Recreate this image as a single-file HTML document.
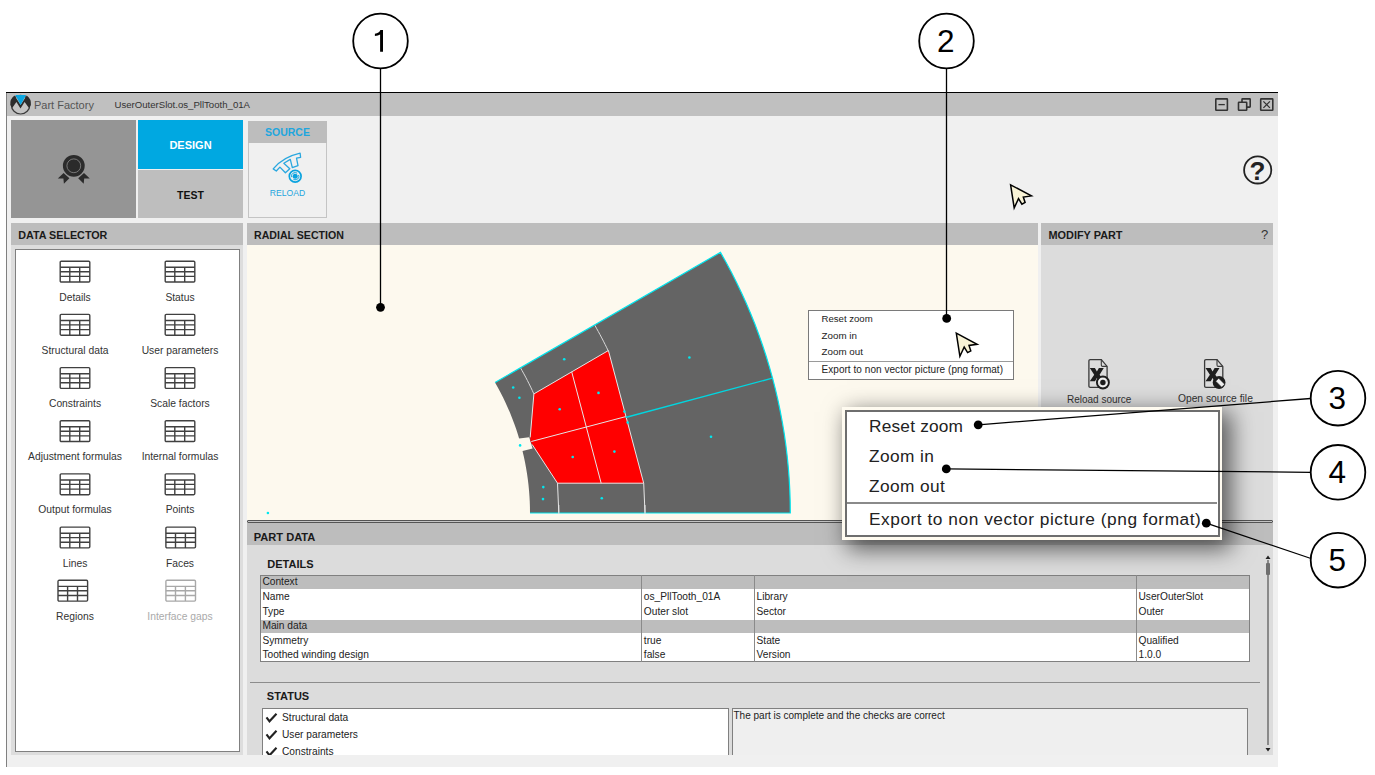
<!DOCTYPE html>
<html><head><meta charset="utf-8"><style>
*{margin:0;padding:0;box-sizing:border-box}
html,body{width:1375px;height:775px;overflow:hidden;background:#fff;font-family:"Liberation Sans",sans-serif;color:#333}
.a{position:absolute}
.hdr{position:absolute;background:#bdbdbd;height:22px;font-weight:bold;font-size:11px;color:#1a1a1a;line-height:22px;padding-left:7px;white-space:nowrap}
.t{position:absolute;white-space:nowrap;line-height:1}
svg{position:absolute;overflow:visible}
</style></head><body>
<div class="a" style="left:6px;top:92px;width:1272px;height:1px;background:#000;"></div>
<div class="a" style="left:6px;top:93px;width:1px;height:674px;background:#808080;"></div>
<div class="a" style="left:7px;top:93px;width:1271px;height:23px;background:#c0c0c0;"></div>
<div class="a" style="left:7px;top:116px;width:1271px;height:651px;background:#f0f0f0;"></div>
<svg style="left:0;top:0" width="40" height="120" viewBox="0 0 40 120">
<circle cx="20.6" cy="104.7" r="9.3" fill="#c4c4c4" stroke="#3a3a3a" stroke-width="1.2"/>
<path d="M14.5,95.4 A10,10 0 0 0 10.4,104.9 L12.2,108.1 L16.4,102 L20.5,108.6 L24.6,102 L29,108.1 L30.8,104.9 A10,10 0 0 0 26.7,95.4 L20.6,104.9 Z" fill="#2c2c2c"/>
<path d="M15.3,94.9 L26.1,94.9 L20.6,104.9 Z" fill="#0aa6e0"/>
</svg>
<div class="t" style="left:34px;top:99.58px;font-size:11px;color:#555;font-weight:normal;">Part Factory</div>
<div class="t" style="left:114.5px;top:99.86px;font-size:9.6px;color:#333;font-weight:normal;">UserOuterSlot.os_PllTooth_01A</div>
<svg style="left:1200px;top:90px" width="80" height="30" viewBox="1200 90 80 30">
<rect x="1215.8" y="98.9" width="11.6" height="11.4" fill="none" stroke="#333" stroke-width="1.6" rx="0.5"/>
<line x1="1218.4" y1="104.6" x2="1224.8" y2="104.6" stroke="#333" stroke-width="1.3"/>
<rect x="1242" y="98.9" width="8.2" height="8.2" fill="none" stroke="#333" stroke-width="1.6" rx="0.5"/>
<rect x="1238.5" y="102.2" width="8.2" height="8.1" fill="#c0c0c0" stroke="#333" stroke-width="1.6" rx="0.5"/>
<rect x="1260.7" y="98.9" width="12.1" height="11.4" fill="none" stroke="#333" stroke-width="1.6" rx="0.5"/>
<path d="M1263.4,101.4 L1269.9,107.9 M1269.9,101.4 L1263.4,107.9" stroke="#333" stroke-width="1.3"/>
</svg>
<div class="a" style="left:11px;top:120px;width:125px;height:98px;background:#959595;"></div>
<svg style="left:0;top:0" width="100" height="200" viewBox="0 0 100 200">
<circle cx="73.8" cy="165.8" r="10.9" fill="#2b2b2b"/>
<circle cx="73.8" cy="165.8" r="6.9" fill="none" stroke="#8a8a8a" stroke-width="0.8"/>
<path d="M57.8,178.4 L63.6,173 L69.4,178.2 L63.9,183.8 L63.4,178.6 Z" fill="#2b2b2b"/>
<path d="M89.8,178.4 L84,173 L78.2,178.2 L83.7,183.8 L84.2,178.6 Z" fill="#2b2b2b"/>
</svg>
<div class="a" style="left:138px;top:120px;width:105px;height:49px;background:#00a8e1;"></div>
<div class="t" style="left:40.5px;width:300px;text-align:center;top:140.38px;font-size:11px;color:#fff;font-weight:bold;">DESIGN</div>
<div class="a" style="left:138px;top:170px;width:105px;height:48px;background:#bebebe;"></div>
<div class="t" style="left:40.5px;width:300px;text-align:center;top:189.60px;font-size:10.5px;color:#111;font-weight:bold;">TEST</div>
<div class="a" style="left:248px;top:121px;width:79px;height:97px;background:#f0f0f0;border:1px solid #c4c4c4"></div>
<div class="a" style="left:248px;top:121px;width:79px;height:22px;background:#bdbdbd;"></div>
<div class="t" style="left:137.5px;width:300px;text-align:center;top:127.10px;font-size:10.5px;color:#1ea6de;font-weight:bold;">SOURCE</div>
<svg style="left:240px;top:140px" width="80" height="50" viewBox="240 140 80 50">
<path d="M273.2,168.9 Q283,157 300.1,153.2 L300.6,157.3 L296.5,158.1 L298,165.6 L292.3,167.6 L290.3,159.4 L283.8,163.2 L289.8,168.7 L285.4,172.8 L279.9,167.1 L276.3,171 Z" fill="none" stroke="#29a7df" stroke-width="1.3" stroke-linejoin="round"/>
<circle cx="295.2" cy="176.2" r="5.9" fill="#f0f0f0" stroke="#0aa3df" stroke-width="1.7"/>
<circle cx="295.2" cy="176.2" r="3.6" fill="none" stroke="#0aa3df" stroke-width="0.9" stroke-dasharray="8.5 2.8" transform="rotate(-20 295.2 176.2)"/>
<circle cx="295.2" cy="176.2" r="2.5" fill="#0aa3df"/>
</svg>
<div class="t" style="left:137.5px;width:300px;text-align:center;top:188.71px;font-size:8.6px;color:#1ea6de;font-weight:normal;">RELOAD</div>
<svg style="left:1200px;top:140px" width="80" height="60" viewBox="1200 140 80 60">
<circle cx="1257.7" cy="169.9" r="13.6" fill="none" stroke="#222" stroke-width="1.8"/>
</svg>
<div class="t" style="left:1107.5px;width:300px;text-align:center;top:157.66px;font-size:26px;color:#222;font-weight:bold;">?</div>
<svg style="left:0;top:0" width="1375" height="775" viewBox="0 0 1375 775"><path d="M1010.6,184.8 L1031.4,195.9 L1023.3,197.0 L1025.1,202.4 L1021.9,204.2 L1018.5,198.6 L1014.2,207.9 Z" fill="#f8f3d6" stroke="#000" stroke-width="1.5" stroke-linejoin="miter"/></svg>
<div class="a" style="left:11px;top:223px;width:232px;height:22px;background:#bdbdbd;"></div>
<div class="t" style="left:18.2px;top:229.89px;font-size:10.75px;color:#1a1a1a;font-weight:bold;">DATA SELECTOR</div>
<div class="a" style="left:247px;top:223px;width:791px;height:22px;background:#bdbdbd;"></div>
<div class="t" style="left:254px;top:230.02px;font-size:10.6px;color:#1a1a1a;font-weight:bold;">RADIAL SECTION</div>
<div class="a" style="left:1041px;top:223px;width:232px;height:22px;background:#bdbdbd;"></div>
<div class="t" style="left:1048.5px;top:229.76px;font-size:10.9px;color:#1a1a1a;font-weight:bold;">MODIFY PART</div>
<div class="t" style="left:1261px;top:228.48px;font-size:13px;color:#333;font-weight:normal;">?</div>
<div class="a" style="left:11px;top:245px;width:232px;height:510px;background:#dddddd;"></div>
<div class="a" style="left:15px;top:249px;width:225px;height:503px;background:#fff;border:1.5px solid #808080"></div>
<svg style="left:0;top:0" width="1" height="1" viewBox="0 0 1 1" ><g transform="translate(60.2,261.2)" fill="none" stroke="#404040" stroke-width="1.4"><rect x="0" y="0" width="29.6" height="20.8" rx="1.1"/><path d="M0,6.1 H29.6 M0,10.5 H29.6 M0,15.2 H29.6 M9.6,6.1 V20.8 M19.5,6.1 V20.8"/></g></svg>
<div class="t" style="left:-75px;width:300px;text-align:center;top:292.67px;font-size:10.3px;color:#333;font-weight:normal;">Details</div>
<svg style="left:0;top:0" width="1" height="1" viewBox="0 0 1 1" ><g transform="translate(165.2,261.2)" fill="none" stroke="#404040" stroke-width="1.4"><rect x="0" y="0" width="29.6" height="20.8" rx="1.1"/><path d="M0,6.1 H29.6 M0,10.5 H29.6 M0,15.2 H29.6 M9.6,6.1 V20.8 M19.5,6.1 V20.8"/></g></svg>
<div class="t" style="left:30px;width:300px;text-align:center;top:292.67px;font-size:10.3px;color:#333;font-weight:normal;">Status</div>
<svg style="left:0;top:0" width="1" height="1" viewBox="0 0 1 1" ><g transform="translate(60.2,314.4)" fill="none" stroke="#404040" stroke-width="1.4"><rect x="0" y="0" width="29.6" height="20.8" rx="1.1"/><path d="M0,6.1 H29.6 M0,10.5 H29.6 M0,15.2 H29.6 M9.6,6.1 V20.8 M19.5,6.1 V20.8"/></g></svg>
<div class="t" style="left:-75px;width:300px;text-align:center;top:345.85px;font-size:10.3px;color:#333;font-weight:normal;">Structural data</div>
<svg style="left:0;top:0" width="1" height="1" viewBox="0 0 1 1" ><g transform="translate(165.2,314.4)" fill="none" stroke="#404040" stroke-width="1.4"><rect x="0" y="0" width="29.6" height="20.8" rx="1.1"/><path d="M0,6.1 H29.6 M0,10.5 H29.6 M0,15.2 H29.6 M9.6,6.1 V20.8 M19.5,6.1 V20.8"/></g></svg>
<div class="t" style="left:30px;width:300px;text-align:center;top:345.85px;font-size:10.3px;color:#333;font-weight:normal;">User parameters</div>
<svg style="left:0;top:0" width="1" height="1" viewBox="0 0 1 1" ><g transform="translate(60.2,367.6)" fill="none" stroke="#404040" stroke-width="1.4"><rect x="0" y="0" width="29.6" height="20.8" rx="1.1"/><path d="M0,6.1 H29.6 M0,10.5 H29.6 M0,15.2 H29.6 M9.6,6.1 V20.8 M19.5,6.1 V20.8"/></g></svg>
<div class="t" style="left:-75px;width:300px;text-align:center;top:399.03px;font-size:10.3px;color:#333;font-weight:normal;">Constraints</div>
<svg style="left:0;top:0" width="1" height="1" viewBox="0 0 1 1" ><g transform="translate(165.2,367.6)" fill="none" stroke="#404040" stroke-width="1.4"><rect x="0" y="0" width="29.6" height="20.8" rx="1.1"/><path d="M0,6.1 H29.6 M0,10.5 H29.6 M0,15.2 H29.6 M9.6,6.1 V20.8 M19.5,6.1 V20.8"/></g></svg>
<div class="t" style="left:30px;width:300px;text-align:center;top:399.03px;font-size:10.3px;color:#333;font-weight:normal;">Scale factors</div>
<svg style="left:0;top:0" width="1" height="1" viewBox="0 0 1 1" ><g transform="translate(60.2,420.7)" fill="none" stroke="#404040" stroke-width="1.4"><rect x="0" y="0" width="29.6" height="20.8" rx="1.1"/><path d="M0,6.1 H29.6 M0,10.5 H29.6 M0,15.2 H29.6 M9.6,6.1 V20.8 M19.5,6.1 V20.8"/></g></svg>
<div class="t" style="left:-75px;width:300px;text-align:center;top:452.21px;font-size:10.3px;color:#333;font-weight:normal;">Adjustment formulas</div>
<svg style="left:0;top:0" width="1" height="1" viewBox="0 0 1 1" ><g transform="translate(165.2,420.7)" fill="none" stroke="#404040" stroke-width="1.4"><rect x="0" y="0" width="29.6" height="20.8" rx="1.1"/><path d="M0,6.1 H29.6 M0,10.5 H29.6 M0,15.2 H29.6 M9.6,6.1 V20.8 M19.5,6.1 V20.8"/></g></svg>
<div class="t" style="left:30px;width:300px;text-align:center;top:452.21px;font-size:10.3px;color:#333;font-weight:normal;">Internal formulas</div>
<svg style="left:0;top:0" width="1" height="1" viewBox="0 0 1 1" ><g transform="translate(60.2,473.9)" fill="none" stroke="#404040" stroke-width="1.4"><rect x="0" y="0" width="29.6" height="20.8" rx="1.1"/><path d="M0,6.1 H29.6 M0,10.5 H29.6 M0,15.2 H29.6 M9.6,6.1 V20.8 M19.5,6.1 V20.8"/></g></svg>
<div class="t" style="left:-75px;width:300px;text-align:center;top:505.39px;font-size:10.3px;color:#333;font-weight:normal;">Output formulas</div>
<svg style="left:0;top:0" width="1" height="1" viewBox="0 0 1 1" ><g transform="translate(165.2,473.9)" fill="none" stroke="#404040" stroke-width="1.4"><rect x="0" y="0" width="29.6" height="20.8" rx="1.1"/><path d="M0,6.1 H29.6 M0,10.5 H29.6 M0,15.2 H29.6 M9.6,6.1 V20.8 M19.5,6.1 V20.8"/></g></svg>
<div class="t" style="left:30px;width:300px;text-align:center;top:505.39px;font-size:10.3px;color:#333;font-weight:normal;">Points</div>
<svg style="left:0;top:0" width="1" height="1" viewBox="0 0 1 1" ><g transform="translate(60.2,527.1)" fill="none" stroke="#404040" stroke-width="1.4"><rect x="0" y="0" width="29.6" height="20.8" rx="1.1"/><path d="M0,6.1 H29.6 M0,10.5 H29.6 M0,15.2 H29.6 M9.6,6.1 V20.8 M19.5,6.1 V20.8"/></g></svg>
<div class="t" style="left:-75px;width:300px;text-align:center;top:558.57px;font-size:10.3px;color:#333;font-weight:normal;">Lines</div>
<svg style="left:0;top:0" width="1" height="1" viewBox="0 0 1 1" ><g transform="translate(165.9,527.1)" fill="none" stroke="#404040" stroke-width="1.4"><rect x="0" y="0" width="29.6" height="20.8" rx="1.1"/><path d="M0,6.1 H29.6 M0,10.5 H29.6 M0,15.2 H29.6 M9.6,6.1 V20.8 M19.5,6.1 V20.8"/></g></svg>
<div class="t" style="left:30px;width:300px;text-align:center;top:558.57px;font-size:10.3px;color:#333;font-weight:normal;">Faces</div>
<svg style="left:0;top:0" width="1" height="1" viewBox="0 0 1 1" ><g transform="translate(58.0,580.3)" fill="none" stroke="#404040" stroke-width="1.4"><rect x="0" y="0" width="29.6" height="20.8" rx="1.1"/><path d="M0,6.1 H29.6 M0,10.5 H29.6 M0,15.2 H29.6 M9.6,6.1 V20.8 M19.5,6.1 V20.8"/></g></svg>
<div class="t" style="left:-75px;width:300px;text-align:center;top:611.75px;font-size:10.3px;color:#333;font-weight:normal;">Regions</div>
<svg style="left:0;top:0" width="1" height="1" viewBox="0 0 1 1" ><g transform="translate(165.9,580.3)" fill="none" stroke="#a8a8a8" stroke-width="1.4"><rect x="0" y="0" width="29.6" height="20.8" rx="1.1"/><path d="M0,6.1 H29.6 M0,10.5 H29.6 M0,15.2 H29.6 M9.6,6.1 V20.8 M19.5,6.1 V20.8"/></g></svg>
<div class="t" style="left:30px;width:300px;text-align:center;top:611.75px;font-size:10.3px;color:#aaa;font-weight:normal;">Interface gaps</div>
<div class="a" style="left:247px;top:245px;width:791px;height:275px;background:#fdf9ee;"></div>
<svg style="left:0;top:0" width="1375" height="775" viewBox="0 0 1375 775"><path d="M790.30,513.00 L790.18,501.63 L789.80,490.26 L789.18,478.91 L788.32,467.57 L787.20,456.25 L785.84,444.96 L784.23,433.70 L782.38,422.48 L780.28,411.30 L777.94,400.17 L775.36,389.09 L772.54,378.08 L769.47,367.13 L766.17,356.24 L762.63,345.43 L758.86,334.70 L754.86,324.06 L750.62,313.51 L746.15,303.05 L741.46,292.69 L736.54,282.43 L731.40,272.29 L726.04,262.26 L720.46,252.35 L495.03,382.50 L497.83,387.46 L500.51,392.48 L503.08,397.56 L505.55,402.70 L507.90,407.88 L510.13,413.12 L512.25,418.40 L514.26,423.73 L516.15,429.10 L517.92,434.52 L519.57,439.96 L521.11,445.45 L522.52,450.96 L523.81,456.51 L524.98,462.08 L526.03,467.68 L526.96,473.30 L527.77,478.93 L528.45,484.59 L529.01,490.25 L529.44,495.93 L529.75,501.62 L529.94,507.31 L530.00,513.00 Z" fill="#646464"/><path d="M515,438.9 L529.2,437.3 L532.6,448.6 L520.5,451.4 Z" fill="#fdf9ee"/><path d="M533.90,393.90 L608.40,350.50 L625.80,416.60 L643.70,483.20 L557.50,483.20 L532.20,444.50 L530.60,441.20 L530.20,437.40 Z" fill="#ff0000"/><line x1="533.9" y1="393.9" x2="608.4" y2="350.5" stroke="#e6e6e6" stroke-width="1"/><line x1="608.4" y1="350.5" x2="643.7" y2="483.2" stroke="#e6e6e6" stroke-width="1"/><line x1="557.5" y1="483.2" x2="643.7" y2="483.2" stroke="#e6e6e6" stroke-width="1"/><line x1="532.2" y1="444.5" x2="557.5" y2="483.2" stroke="#e6e6e6" stroke-width="1"/><line x1="530.2" y1="437.4" x2="533.9" y2="393.9" stroke="#e6e6e6" stroke-width="1"/><line x1="531.3" y1="441.5" x2="625.8" y2="416.6" stroke="#e6e6e6" stroke-width="1"/><line x1="571.7" y1="371.8" x2="601.2" y2="483.3" stroke="#e6e6e6" stroke-width="1"/><line x1="557.5" y1="483.2" x2="558.8" y2="513" stroke="#e6e6e6" stroke-width="1"/><line x1="643.7" y1="483.2" x2="645" y2="513" stroke="#e6e6e6" stroke-width="1"/><path d="M520.24,367.36 L522.09,370.61 L523.91,373.88 L525.68,377.17 L527.40,380.48 L529.09,383.82 L530.73,387.18 L532.33,390.56 L533.88,393.96" fill="none" stroke="#d8d8d8" stroke-width="1"/><path d="M594.63,325.00 L596.46,328.21 L598.25,331.43 L600.02,334.67 L601.76,337.93 L603.46,341.20 L605.13,344.50 L606.77,347.80 L608.37,351.13" fill="none" stroke="#d8d8d8" stroke-width="1"/><path d="M495.03,382.50 L720.46,252.35 L720.46,252.35 L726.04,262.26 L731.40,272.29 L736.54,282.43 L741.46,292.69 L746.15,303.05 L750.62,313.51 L754.86,324.06 L758.86,334.70 L762.63,345.43 L766.17,356.24 L769.47,367.13 L772.54,378.08 L775.36,389.09 L777.94,400.17 L780.28,411.30 L782.38,422.48 L784.23,433.70 L785.84,444.96 L787.20,456.25 L788.32,467.57 L789.18,478.91 L789.80,490.26 L790.18,501.63 L790.30,513.00 L530.00,513.00" fill="none" stroke="#00e5ee" stroke-width="1.2"/><line x1="625.5" y1="417.5" x2="772.3" y2="378.2" stroke="#00d6e0" stroke-width="1.3"/><line x1="558.8" y1="505" x2="558.8" y2="514" stroke="#e6e6e6" stroke-width="1"/><line x1="645" y1="505" x2="645" y2="514" stroke="#e6e6e6" stroke-width="1"/><circle cx="564.2" cy="359.2" r="1.3" fill="#00e8f0"/><circle cx="689.4" cy="357.5" r="1.3" fill="#00e8f0"/><circle cx="513.2" cy="387.5" r="1.3" fill="#00e8f0"/><circle cx="519.4" cy="397.7" r="1.3" fill="#00e8f0"/><circle cx="559.7" cy="409.3" r="1.3" fill="#00e8f0"/><circle cx="598.5" cy="392.9" r="1.3" fill="#00e8f0"/><circle cx="572.7" cy="457" r="1.3" fill="#00e8f0"/><circle cx="614.4" cy="451.6" r="1.3" fill="#00e8f0"/><circle cx="520.1" cy="445.4" r="1.3" fill="#00e8f0"/><circle cx="543.3" cy="487.1" r="1.3" fill="#00e8f0"/><circle cx="543" cy="499.1" r="1.3" fill="#00e8f0"/><circle cx="601.8" cy="498.2" r="1.3" fill="#00e8f0"/><circle cx="711" cy="436.8" r="1.3" fill="#00e8f0"/><circle cx="267.9" cy="513" r="1.3" fill="#00e8f0"/><circle cx="624.4" cy="411.5" r="1.3" fill="#00e8f0"/><circle cx="627.7" cy="422.5" r="1.3" fill="#00e8f0"/></svg>
<div class="a" style="left:808px;top:310px;width:206px;height:70px;background:#fff;border:1.3px solid #7a7a7a"></div>
<div class="a" style="left:809px;top:361px;width:204px;height:1px;background:#9a9a9a;"></div>
<div class="t" style="left:821.5px;top:314.26px;font-size:9.6px;color:#222;font-weight:normal;">Reset zoom</div>
<div class="t" style="left:821.5px;top:330.69px;font-size:9.8px;color:#222;font-weight:normal;">Zoom in</div>
<div class="t" style="left:821.5px;top:347.39px;font-size:9.8px;color:#222;font-weight:normal;">Zoom out</div>
<div class="t" style="left:821.5px;top:365.32px;font-size:10px;color:#222;font-weight:normal;letter-spacing:0.05px">Export to non vector picture (png format)</div>
<svg style="left:0;top:0" width="1375" height="775" viewBox="0 0 1375 775"><path d="M956.3,333.2 L977.1,344.3 L969.0,345.4 L970.8,350.8 L967.6,352.6 L964.2,347.0 L959.9,356.3 Z" fill="#f8f3d6" stroke="#000" stroke-width="1.5" stroke-linejoin="miter"/></svg>
<div class="a" style="left:1041px;top:245px;width:232px;height:275px;background:#dcdcdc;"></div>
<div class="a" style="left:247px;top:519.6px;width:1026px;height:3.4px;background:#c4c4c4;border:1px solid #555;border-radius:1px"></div>
<div class="a" style="left:247px;top:523px;width:1026px;height:22px;background:#bdbdbd;"></div>
<div class="t" style="left:253.7px;top:532.29px;font-size:11.1px;color:#1a1a1a;font-weight:bold;">PART DATA</div>
<div class="a" style="left:247px;top:545px;width:1026px;height:210px;background:#dcdcdc;"></div>
<svg style="left:0;top:0" width="1375" height="775" viewBox="0 0 1375 775"><g transform="translate(1087.6,358.8)"><path d="M1.3,2.2 Q1.3,0.8 2.7,0.8 H13.7 L19.5,7.6 V27.3 Q19.5,28.6 18.2,28.6 H2.7 Q1.3,28.6 1.3,27.3 Z" fill="none" stroke="#3a3a3a" stroke-width="1.3"/><path d="M13.7,0.8 V6.2 Q13.7,7.6 15,7.6 H19.5" fill="none" stroke="#3a3a3a" stroke-width="1.1"/><path d="M2.2,9.2 H7.3 L9.3,12.6 L11.3,9.2 H16.2 L12,15.9 L16.3,22.5 H11.2 L9.3,19.2 L7.4,22.5 H2.2 L6.6,15.9 Z" fill="#1e1e1e"/><circle cx="15.3" cy="23.7" r="6.0" fill="#dcdcdc" stroke="#1e1e1e" stroke-width="1.9"/><circle cx="15.3" cy="23.7" r="3.9" fill="none" stroke="#f4f4f4" stroke-width="1.2" stroke-dasharray="9 3.25"/><circle cx="15.3" cy="23.7" r="2.7" fill="#1e1e1e"/></g><g transform="translate(1203.3,358.8)"><path d="M1.3,2.2 Q1.3,0.8 2.7,0.8 H13.7 L19.5,7.6 V27.3 Q19.5,28.6 18.2,28.6 H2.7 Q1.3,28.6 1.3,27.3 Z" fill="none" stroke="#3a3a3a" stroke-width="1.3"/><path d="M13.7,0.8 V6.2 Q13.7,7.6 15,7.6 H19.5" fill="none" stroke="#3a3a3a" stroke-width="1.1"/><path d="M2.2,9.2 H7.3 L9.3,12.6 L11.3,9.2 H16.2 L12,15.9 L16.3,22.5 H11.2 L9.3,19.2 L7.4,22.5 H2.2 L6.6,15.9 Z" fill="#1e1e1e"/><circle cx="15.8" cy="23.7" r="6.4" fill="#1e1e1e"/><path d="M12.2,21.6 L15.2,18.6 L21.2,24.6 L18.2,27.6 Z" fill="#eeeeee" stroke="#1e1e1e" stroke-width="0.6" transform="translate(0.2,0.8)"/></g></svg>
<div class="t" style="left:949.2px;width:300px;text-align:center;top:394.72px;font-size:10.0px;color:#333;font-weight:normal;">Reload source</div>
<div class="t" style="left:1065.4px;width:300px;text-align:center;top:394.47px;font-size:10.3px;color:#333;font-weight:normal;">Open source file</div>
<div class="t" style="left:267.3px;top:558.68px;font-size:11px;color:#1a1a1a;font-weight:bold;">DETAILS</div>
<div class="a" style="left:259.9px;top:574.9px;width:989.6999999999999px;height:87.30000000000007px;background:#fff;border:1.3px solid #808080"></div>
<div class="a" style="left:260.9px;top:575.9px;width:987.6999999999999px;height:13.2px;background:#bdbdbd;"></div>
<div class="a" style="left:260.9px;top:619.55px;width:987.6999999999999px;height:13.2px;background:#bdbdbd;"></div>
<div class="a" style="left:641.0px;top:574.9px;width:1.3px;height:87.30000000000007px;background:#8a8a8a;"></div>
<div class="a" style="left:753.8px;top:574.9px;width:1.3px;height:87.30000000000007px;background:#8a8a8a;"></div>
<div class="a" style="left:1135.9px;top:574.9px;width:1.3px;height:87.30000000000007px;background:#8a8a8a;"></div>
<div class="t" style="left:262.4px;top:577.46px;font-size:10.2px;color:#222;font-weight:normal;">Context</div>
<div class="t" style="left:262.4px;top:592.01px;font-size:10.2px;color:#222;font-weight:normal;">Name</div>
<div class="t" style="left:643.8px;top:592.01px;font-size:10.2px;color:#222;font-weight:normal;">os_PllTooth_01A</div>
<div class="t" style="left:756.5px;top:592.01px;font-size:10.2px;color:#222;font-weight:normal;">Library</div>
<div class="t" style="left:1138.5px;top:592.01px;font-size:10.2px;color:#222;font-weight:normal;">UserOuterSlot</div>
<div class="t" style="left:262.4px;top:606.56px;font-size:10.2px;color:#222;font-weight:normal;">Type</div>
<div class="t" style="left:643.8px;top:606.56px;font-size:10.2px;color:#222;font-weight:normal;">Outer slot</div>
<div class="t" style="left:756.5px;top:606.56px;font-size:10.2px;color:#222;font-weight:normal;">Sector</div>
<div class="t" style="left:1138.5px;top:606.56px;font-size:10.2px;color:#222;font-weight:normal;">Outer</div>
<div class="t" style="left:262.4px;top:621.11px;font-size:10.2px;color:#222;font-weight:normal;">Main data</div>
<div class="t" style="left:262.4px;top:635.66px;font-size:10.2px;color:#222;font-weight:normal;">Symmetry</div>
<div class="t" style="left:643.8px;top:635.66px;font-size:10.2px;color:#222;font-weight:normal;">true</div>
<div class="t" style="left:756.5px;top:635.66px;font-size:10.2px;color:#222;font-weight:normal;">State</div>
<div class="t" style="left:1138.5px;top:635.66px;font-size:10.2px;color:#222;font-weight:normal;">Qualified</div>
<div class="t" style="left:262.4px;top:650.21px;font-size:10.2px;color:#222;font-weight:normal;">Toothed winding design</div>
<div class="t" style="left:643.8px;top:650.21px;font-size:10.2px;color:#222;font-weight:normal;">false</div>
<div class="t" style="left:756.5px;top:650.21px;font-size:10.2px;color:#222;font-weight:normal;">Version</div>
<div class="t" style="left:1138.5px;top:650.21px;font-size:10.2px;color:#222;font-weight:normal;">1.0.0</div>
<div class="a" style="left:249.5px;top:682px;width:1010px;height:1.3px;background:#8c8c8c;"></div>
<div class="t" style="left:266.8px;top:690.58px;font-size:11px;color:#1a1a1a;font-weight:bold;">STATUS</div>
<div class="a" style="left:261.8px;top:708px;width:467px;height:47px;background:#fff;border:1.3px solid #808080;border-bottom:none"></div>
<div class="a" style="left:731.8px;top:708px;width:516px;height:47px;background:#efefef;border:1.3px solid #808080;border-bottom:none"></div>
<svg style="left:0;top:0" width="1" height="1" viewBox="0 0 1 1"><path d="M266.5,717.3 L269.5,721.3 L276.5,713.8" fill="none" stroke="#222" stroke-width="2.1"/></svg>
<div class="t" style="left:282px;top:712.66px;font-size:10.2px;color:#222;font-weight:normal;">Structural data</div>
<svg style="left:0;top:0" width="1" height="1" viewBox="0 0 1 1"><path d="M266.5,734.3 L269.5,738.3 L276.5,730.8" fill="none" stroke="#222" stroke-width="2.1"/></svg>
<div class="t" style="left:282px;top:729.66px;font-size:10.2px;color:#222;font-weight:normal;">User parameters</div>
<svg style="left:0;top:0" width="1" height="1" viewBox="0 0 1 1"><path d="M266.5,751.3 L269.5,755.3 L276.5,747.8" fill="none" stroke="#222" stroke-width="2.1"/></svg>
<div class="t" style="left:282px;top:746.66px;font-size:10.2px;color:#222;font-weight:normal;">Constraints</div>
<div class="t" style="left:733.5px;top:710.62px;font-size:10px;color:#222;font-weight:normal;">The part is complete and the checks are correct</div>
<div class="a" style="left:247px;top:755px;width:1031px;height:12px;background:#f0f0f0;"></div>
<div class="a" style="left:1267.3px;top:560px;width:1.4px;height:185px;background:#8a8a8a;"></div>
<div class="a" style="left:1266px;top:562.5px;width:4px;height:12px;background:#6e6e6e;border-radius:1px"></div>
<svg style="left:0;top:0" width="1" height="1" viewBox="0 0 1 1"><path d="M1265.5,559 L1268,555.5 L1270.5,559 Z" fill="#222"/><path d="M1265.5,748 L1268,751.5 L1270.5,748 Z" fill="#222"/></svg>
<div class="a" style="left:842px;top:407px;width:380px;height:133px;background:#fffbf0;box-shadow:7px 7px 22px 2px rgba(0,0,0,0.6)"></div>
<div class="a" style="left:844.5px;top:409.5px;width:375px;height:127.3px;background:#fff;border:2.4px solid #6e6e6e"></div>
<div class="a" style="left:847px;top:502px;width:370px;height:1.6px;background:#8a8a8a;"></div>
<div class="t" style="left:869px;top:418.14px;font-size:17.3px;color:#222;font-weight:normal;letter-spacing:0.2px">Reset zoom</div>
<div class="t" style="left:869px;top:447.84px;font-size:17.3px;color:#222;font-weight:normal;letter-spacing:0.4px">Zoom in</div>
<div class="t" style="left:869px;top:477.74px;font-size:17.3px;color:#222;font-weight:normal;letter-spacing:0.4px">Zoom out</div>
<div class="t" style="left:869px;top:510.54px;font-size:17.3px;color:#222;font-weight:normal;letter-spacing:0.54px">Export to non vector picture (png format)</div>
<svg style="left:0;top:0" width="1375" height="775" viewBox="0 0 1375 775"><circle cx="380.5" cy="41" r="27.3" fill="#fff" stroke="#000" stroke-width="1.8"/><circle cx="946.5" cy="41" r="27.3" fill="#fff" stroke="#000" stroke-width="1.8"/><circle cx="1338" cy="398.2" r="27.3" fill="#fff" stroke="#000" stroke-width="1.8"/><circle cx="1338" cy="472.3" r="27.3" fill="#fff" stroke="#000" stroke-width="1.8"/><circle cx="1338" cy="560.2" r="27.3" fill="#fff" stroke="#000" stroke-width="1.8"/><line x1="380.5" y1="68" x2="380.5" y2="307.3" stroke="#000" stroke-width="1.3"/><line x1="946.5" y1="68" x2="946.5" y2="318.4" stroke="#000" stroke-width="1.3"/><line x1="978.2" y1="424.8" x2="1310.7" y2="398.5" stroke="#000" stroke-width="1.3"/><line x1="946.3" y1="468.9" x2="1310.7" y2="472.3" stroke="#000" stroke-width="1.3"/><line x1="1206.3" y1="523.2" x2="1311" y2="558.5" stroke="#000" stroke-width="1.3"/><circle cx="380.5" cy="307.3" r="4.4" fill="#000"/><circle cx="946.7" cy="318.4" r="4.4" fill="#000"/><circle cx="978.2" cy="424.8" r="4.4" fill="#000"/><circle cx="946.3" cy="468.9" r="4.4" fill="#000"/><circle cx="1206.3" cy="523.2" r="4.4" fill="#000"/></svg>
<div class="t" style="left:795.8px;width:300px;text-align:center;top:25.60px;font-size:31.5px;color:#000;font-weight:normal;">2</div>
<div class="t" style="left:1187.3px;width:300px;text-align:center;top:383.20px;font-size:31.5px;color:#000;font-weight:normal;">3</div>
<div class="t" style="left:1187.3px;width:300px;text-align:center;top:457.30px;font-size:31.5px;color:#000;font-weight:normal;">4</div>
<div class="t" style="left:1187.3px;width:300px;text-align:center;top:545.20px;font-size:31.5px;color:#000;font-weight:normal;">5</div>
<svg style="left:0;top:0" width="1" height="1" viewBox="0 0 1 1"><path d="M380,30.1 L383,30.1 L383,51.8 L380.1,51.8 L380.1,34.6 Q378.2,35.9 374.9,36 L374.9,33.8 Q379.2,33.2 380.4,30.1 Z" fill="#000"/></svg>
</body></html>
